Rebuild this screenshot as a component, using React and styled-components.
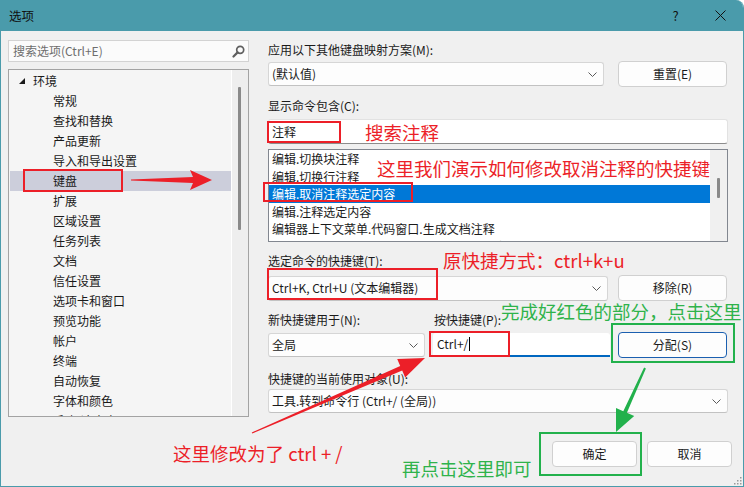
import React from "react";
import styled, { createGlobalStyle } from "styled-components";

const FONT = `"Noto Sans CJK SC", "Noto Sans", sans-serif`;
const RED = "#ec1f28";
const GREEN = "#22b14c";

const GlobalStyle = createGlobalStyle`
  html, body { margin: 0; padding: 0; background: #ffffff; }
  body { font-family: ${FONT}; }
  * { box-sizing: border-box; }
`;

const Window = styled.div`
  position: relative;
  width: 744px;
  height: 487px;
  background: #f0f0f0;
  border: 1px solid #4a9bab;
  border-top: none;
  border-top-right-radius: 8px;
  overflow: hidden;
  display: flex;
  flex-direction: column;
  font-family: ${FONT};
  font-size: 12px;
  color: #1a1a1a;
`;

const TitleBar = styled.div`
  height: 31px;
  flex: none;
  background: #4a9bab;
  display: flex;
  align-items: center;
  padding-left: 8px;
`;

const Title = styled.div`
  flex: 1;
  font-size: 12.5px;
  line-height: 16px;
  color: #111;
`;

const TitleButton = styled.div`
  width: 45px;
  height: 31px;
  display: flex;
  align-items: center;
  justify-content: center;
  font-size: 13px;
  color: #111;
`;

const Main = styled.div`
  display: flex;
  gap: 19px;
  padding: 9px 0 0 7px;
`;

const LeftColumn = styled.div`
  width: 241px;
  display: flex;
  flex-direction: column;
  gap: 7px;
`;

const SearchBox = styled.div`
  height: 22px;
  display: flex;
  align-items: center;
  justify-content: space-between;
  padding: 0 3px 0 4px;
  background: #fbfbfb;
  border: 1px solid #d3d3d3;
  color: #6e6e6e;
  line-height: 16px;
`;

const Tree = styled.div`
  height: 348px;
  display: flex;
  border: 1px solid #a3a3a3;
  background: #f5f5f5;
`;

const TreeList = styled.div`
  flex: 1;
  overflow: hidden;
  padding: 1px 0 0 1px;
`;

const TreeRow = styled.div`
  height: 20px;
  display: flex;
  align-items: center;
  gap: 8px;
  padding-left: ${(p) => (p.$level ? 43 : 9)}px;
  background: ${(p) => (p.$selected ? "#cccedb" : "transparent")};
  line-height: 20px;
  white-space: nowrap;
`;

const ScrollColumn = styled.div`
  width: 17px;
  flex: none;
  background: #eeeeee;
  border-left: 1px solid #ffffff;
  padding: ${(p) => p.$top}px 0 0 ${(p) => p.$left}px;
`;

const ScrollThumb = styled.div`
  width: 3px;
  height: ${(p) => p.$h}px;
  background: #8a8a8a;
  border-radius: 1px;
`;

const RightColumn = styled.div`
  width: 460px;
  display: flex;
  flex-direction: column;
`;

const Label = styled.div`
  height: 16px;
  line-height: 16px;
  margin-top: ${(p) => p.$mt || 0}px;
  width: ${(p) => (p.$w ? `${p.$w}px` : "auto")};
  flex: none;
  white-space: nowrap;
`;

const LabelRow = styled.div`
  display: flex;
  margin-top: ${(p) => p.$mt || 0}px;
`;

const Row = styled.div`
  display: flex;
  align-items: center;
  gap: ${(p) => p.$gap || 10}px;
  height: ${(p) => p.$h || 26}px;
  margin-top: ${(p) => p.$mt || 0}px;
`;

const Dropdown = styled.div`
  width: ${(p) => p.$w}px;
  height: ${(p) => p.$h || 24}px;
  flex: none;
  display: flex;
  align-items: center;
  justify-content: space-between;
  padding: 0 6px 0 3px;
  background: #fdfdfd;
  border: 1px solid #d6d6d6;
  border-bottom-color: #c2c2c2;
  border-radius: 3px;
  line-height: 16px;
  white-space: nowrap;
`;

const Button = styled.div`
  width: ${(p) => p.$w || 109}px;
  height: ${(p) => p.$h || 26}px;
  flex: none;
  display: flex;
  align-items: center;
  justify-content: center;
  background: #fdfdfd;
  border: 1px solid ${(p) => (p.$default ? "#1b5fb0" : "#d0d0d0")};
  border-radius: 4px;
  line-height: 16px;
`;

const TextInput = styled.div`
  height: 25px;
  margin-top: 5px;
  display: flex;
  align-items: center;
  padding-left: 3px;
  background: #ffffff;
  border: 1px solid #e2e2e2;
  border-bottom-color: #8c8c8c;
  border-radius: 3px;
  line-height: 16px;
`;

const KeyInput = styled.div`
  width: 177px;
  height: 24px;
  flex: none;
  display: flex;
  align-items: center;
  padding-left: 4px;
  background: #ffffff;
  border-bottom: 2px solid #0067c0;
  border-radius: 3px 3px 0 0;
  line-height: 16px;
`;

const Caret = styled.span`
  display: inline-block;
  width: 1px;
  height: 14px;
  margin-left: 1px;
  background: #000;
`;

const ListBox = styled.div`
  height: 93px;
  margin-top: 5px;
  display: flex;
  background: #ffffff;
  border: 1px solid #828790;
`;

const ListBody = styled.div`
  flex: 1;
  overflow: hidden;
`;

const ListRow = styled.div`
  height: 17.5px;
  line-height: 17.5px;
  padding-left: 3px;
  white-space: nowrap;
  background: ${(p) => (p.$selected ? "#0078d7" : "transparent")};
  color: ${(p) => (p.$selected ? "#ffffff" : "#1a1a1a")};
`;

const ListScroll = styled(ScrollColumn)`
  background: #f0f0f0;
  border-left: none;
`;

const Footer = styled.div`
  display: flex;
  justify-content: flex-end;
  gap: 10px;
  margin-top: 24px;
  padding-right: 11px;
`;

/* annotation overlays */
const Mark = styled.div`
  position: absolute;
  left: ${(p) => p.$x - 1}px;
  top: ${(p) => p.$y}px;
  width: ${(p) => p.$w}px;
  height: ${(p) => p.$h}px;
  border: 2px solid ${(p) => p.$color};
  pointer-events: none;
`;

const Note = styled.div`
  position: absolute;
  left: ${(p) => p.$x - 1}px;
  top: ${(p) => p.$y}px;
  font-size: 18.5px;
  line-height: 24px;
  white-space: nowrap;
  color: ${(p) => p.$color};
  pointer-events: none;
`;

const ArrowLayer = styled.svg`
  position: absolute;
  left: -1px;
  top: 0;
  width: 744px;
  height: 487px;
  pointer-events: none;
`;

const Grip = styled.svg`
  position: absolute;
  right: 1px;
  bottom: 1px;
  width: 10px;
  height: 10px;
`;

const Chevron = () => (
  <svg width="9" height="5" viewBox="0 0 9 5">
    <path d="M0.5 0.5 L4.5 4.5 L8.5 0.5" fill="none" stroke="#5a5a5a" strokeWidth="1" />
  </svg>
);

const SearchIcon = () => (
  <svg width="13" height="13" viewBox="0 0 13 13">
    <circle cx="8.2" cy="4.8" r="3.5" fill="none" stroke="#5f5f5f" strokeWidth="1.7" />
    <path d="M5.6 7.4 L1.5 11.5" stroke="#5f5f5f" strokeWidth="2.2" strokeLinecap="round" />
  </svg>
);

const ExpandedTriangle = () => (
  <svg width="6" height="6" viewBox="0 0 6 6">
    <polygon points="6,0 6,6 0,6" fill="#1a1a1a" />
  </svg>
);

const CollapsedTriangle = () => (
  <svg width="6" height="8" viewBox="0 0 6 8">
    <polygon points="0.5,0.5 5.5,4 0.5,7.5" fill="none" stroke="#1a1a1a" />
  </svg>
);

const CloseIcon = () => (
  <svg width="11" height="11" viewBox="0 0 11 11">
    <path d="M0.5 0.5 L10.5 10.5 M10.5 0.5 L0.5 10.5" stroke="#111" strokeWidth="1" />
  </svg>
);

const treeChildren = [
  "常规",
  "查找和替换",
  "产品更新",
  "导入和导出设置",
  "键盘",
  "扩展",
  "区域设置",
  "任务列表",
  "文档",
  "信任设置",
  "选项卡和窗口",
  "预览功能",
  "帐户",
  "终端",
  "自动恢复",
  "字体和颜色",
];

const commands = [
  "编辑.切换块注释",
  "编辑.切换行注释",
  "编辑.取消注释选定内容",
  "编辑.注释选定内容",
  "编辑器上下文菜单.代码窗口.生成文档注释",
  "编辑器上下文菜单.代码窗口.切换块注释选定",
];

export default function App() {
  return (
    <>
      <GlobalStyle />
      <Window>
        <TitleBar>
          <Title>选项</Title>
          <TitleButton>?</TitleButton>
          <TitleButton>
            <CloseIcon />
          </TitleButton>
        </TitleBar>

        <Main>
          <LeftColumn>
            <SearchBox>
              <span>搜索选项(Ctrl+E)</span>
              <SearchIcon />
            </SearchBox>
            <Tree>
              <TreeList>
                <TreeRow $level={0}>
                  <ExpandedTriangle />
                  <span>环境</span>
                </TreeRow>
                {treeChildren.map((t) => (
                  <TreeRow key={t} $level={1} $selected={t === "键盘"}>
                    {t}
                  </TreeRow>
                ))}
                <TreeRow $level={0}>
                  <CollapsedTriangle />
                  <span>项目和解决方案</span>
                </TreeRow>
              </TreeList>
              <ScrollColumn $top={17} $left={6}>
                <ScrollThumb $h={143} />
              </ScrollColumn>
            </Tree>
          </LeftColumn>

          <RightColumn>
            <Label $mt={2}>应用以下其他键盘映射方案(M):</Label>
            <Row $mt={3} $gap={14}>
              <Dropdown $w={336} $h={24}>
                <span>(默认值)</span>
                <Chevron />
              </Dropdown>
              <Button>重置(E)</Button>
            </Row>

            <Label $mt={11}>显示命令包含(C):</Label>
            <TextInput>注释</TextInput>

            <ListBox>
              <ListBody>
                {commands.map((c) => (
                  <ListRow key={c} $selected={c === "编辑.取消注释选定内容"}>
                    {c}
                  </ListRow>
                ))}
              </ListBody>
              <ListScroll $top={28} $left={7}>
                <ScrollThumb $h={20} />
              </ListScroll>
            </ListBox>

            <Label $mt={11}>选定命令的快捷键(T):</Label>
            <Row $mt={6} $gap={10}>
              <Dropdown $w={340} $h={25}>
                <span>Ctrl+K, Ctrl+U (文本编辑器)</span>
                <Chevron />
              </Dropdown>
              <Button>移除(R)</Button>
            </Row>

            <LabelRow $mt={11}>
              <Label $w={166}>新快捷键用于(N):</Label>
              <Label>按快捷键(P):</Label>
            </LabelRow>
            <Row $mt={4} $gap={8}>
              <Dropdown $w={157} $h={24}>
                <span>全局</span>
                <Chevron />
              </Dropdown>
              <KeyInput>
                Ctrl+/
                <Caret />
              </KeyInput>
              <Button $default>分配(S)</Button>
            </Row>

            <Label $mt={13}>快捷键的当前使用对象(U):</Label>
            <Row $mt={2} $h={24}>
              <Dropdown $w={460} $h={24}>
                <span>工具.转到命令行 (Ctrl+/ (全局))</span>
                <Chevron />
              </Dropdown>
            </Row>
          </RightColumn>
        </Main>

        <Footer>
          <Button $w={85}>确定</Button>
          <Button $w={85}>取消</Button>
        </Footer>

        {/* annotations drawn over the dialog */}
        <Mark $x={23} $y={169} $w={100} $h={23} $color={RED} />
        <Mark $x={267} $y={121} $w={74} $h={22} $color={RED} />
        <Mark $x={263} $y={182} $w={150} $h={20} $color={RED} />
        <Mark $x={267} $y={268} $w={171} $h={32} $color={RED} />
        <Mark $x={429} $y={331} $w={81} $h={26} $color={RED} />
        <Mark $x={611} $y={323} $w={124} $h={40} $color={GREEN} />
        <Mark $x={539} $y={432} $w={103} $h={44} $color={GREEN} />

        <Note $x={365} $y={120} $color={RED}>搜索注释</Note>
        <Note $x={377} $y={156} $color={RED}>这里我们演示如何修改取消注释的快捷键</Note>
        <Note $x={443} $y={248} $color={RED}>原快捷方式：ctrl+k+u</Note>
        <Note $x={501} $y={299} $color="#2fb34b">完成好红色的部分，点击这里</Note>
        <Note $x={173} $y={441} $color={RED}>这里修改为了 ctrl + /</Note>
        <Note $x={402} $y={456} $color="#2fb34b">再点击这里即可</Note>

        <ArrowLayer viewBox="0 0 744 487">
          <polygon
            points="131,179.5 193,177 190,170 212,180 190,190 193,183 131,180.5"
            fill={RED}
          />
          <polygon
            points="251.8,432.5 400.2,366 397.2,359.1 425,358 405.2,377.5 402.2,370.6 252.2,433.5"
            fill={RED}
          />
          <polygon
            points="644.1,367.6 623.3,411.2 616,407.9 616,432 634.2,416.1 626.9,412.8 645.9,368.4"
            fill={GREEN}
          />
        </ArrowLayer>

        <Grip viewBox="0 0 10 10">
          <g fill="#9a9a9a">
            <rect x="8" y="2" width="1.5" height="1.5" />
            <rect x="5" y="5" width="1.5" height="1.5" />
            <rect x="8" y="5" width="1.5" height="1.5" />
            <rect x="2" y="8" width="1.5" height="1.5" />
            <rect x="5" y="8" width="1.5" height="1.5" />
            <rect x="8" y="8" width="1.5" height="1.5" />
          </g>
        </Grip>
      </Window>
    </>
  );
}
